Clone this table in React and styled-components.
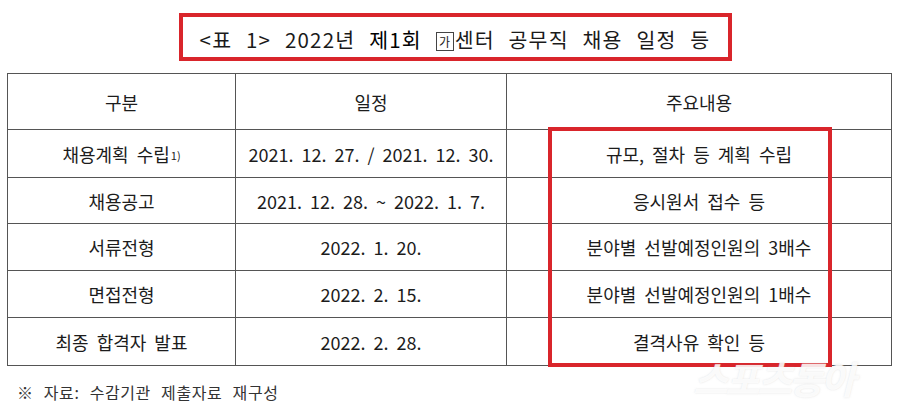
import React from "react";
import styled, { createGlobalStyle } from "styled-components";

const GlobalStyle = createGlobalStyle`
	html, body {
		margin: 0;
		padding: 0;
		background: #fff;
	}
	body {
		font-family: "Noto Sans CJK KR", "Noto Sans", sans-serif;
		color: #222;
	}
`;

const rows = [
	{ name: "채용계획 수립", note: "1)", date: "2021. 12. 27. / 2021. 12. 30.", desc: "규모, 절차 등 계획 수립", h: 48 },
	{ name: "채용공고", date: "2021. 12. 28. ~ 2022. 1. 7.", desc: "응시원서 접수 등", h: 46 },
	{ name: "서류전형", date: "2022. 1. 20.", desc: "분야별 선발예정인원의 3배수", h: 47 },
	{ name: "면접전형", date: "2022. 2. 15.", desc: "분야별 선발예정인원의 1배수", h: 47 },
	{ name: "최종 합격자 발표", date: "2022. 2. 28.", desc: "결격사유 확인 등", h: 48 },
];

function App() {
	return (
		<>
			<GlobalStyle />
			<Page>
				<TitleRow>
					<TitleBox>
						<TitleText>
							&lt;표 1&gt; 2022년 <Strong>제1회</Strong> <Boxed>가</Boxed>센터 공무직 채용 일정 등
						</TitleText>
					</TitleBox>
				</TitleRow>
				<TableWrap>
					<Table>
						<colgroup>
							<col style={{ width: 228 }} />
							<col style={{ width: 271 }} />
							<col />
						</colgroup>
						<thead>
							<tr>
								<Th>구분</Th>
								<Th>일정</Th>
								<Th>주요내용</Th>
							</tr>
						</thead>
						<tbody>
							{rows.map((r) => (
								<tr key={r.name} style={{ height: r.h }}>
									<Td>
										{r.name}
										{r.note && <Note>{r.note}</Note>}
									</Td>
									<Td>{r.date}</Td>
									<Td>{r.desc}</Td>
								</tr>
							))}
						</tbody>
					</Table>
					<Highlight />
					<Watermark>스포츠동아</Watermark>
				</TableWrap>
				<Source>※ 자료: 수감기관 제출자료 재구성</Source>
			</Page>
		</>
	);
}

const Page = styled.div`
	width: 900px;
	height: 413px;
	padding: 13px 8px 0 7px;
	box-sizing: border-box;
	overflow: hidden;
`;

const TitleRow = styled.div`
	display: flex;
	justify-content: center;
	padding-left: 11px;
	margin-bottom: 12px;
`;

const TitleBox = styled.div`
	width: 553px;
	height: 48px;
	box-sizing: border-box;
	border: 4px solid #d9252b;
	display: flex;
	align-items: center;
	justify-content: center;
	padding-top: 3px;
`;

const TitleText = styled.span`
	font-size: 20.5px;
	word-spacing: 8px;
	letter-spacing: 1.2px;
	color: #1a1a1a;
	white-space: pre;
`;

const Strong = styled.span`
	color: #000;
`;

const Boxed = styled.span`
	display: inline-flex;
	align-items: center;
	justify-content: center;
	width: 16px;
	height: 17px;
	border: 1px solid #444;
	font-size: 12px;
	margin-right: 1px;
	line-height: 1;
	letter-spacing: 0;
	word-spacing: 0;
	vertical-align: 1px;
`;

const TableWrap = styled.div`
	position: relative;
`;

const Table = styled.table`
	width: 885px;
	border-collapse: collapse;
	border: 1px solid #555;
	table-layout: fixed;
	font-size: 18px;
	color: #1c1c1c;
`;

const Th = styled.th`
	height: 55px;
	font-weight: 400;
	border: 1px solid #555;
	text-align: center;
	padding: 0;
`;

const Td = styled.td`
	border: 1px solid #555;
	text-align: center;
	padding: 0;
	word-spacing: 4px;
`;

const Note = styled.span`
	font-size: 11px;
	margin-left: 1px;
	position: relative;
	top: -2px;
	word-spacing: 0;
`;

const Highlight = styled.div`
	position: absolute;
	left: 541px;
	top: 54px;
	width: 284px;
	height: 240px;
	box-sizing: border-box;
	border: 4px solid #d9252b;
	pointer-events: none;
`;

const Watermark = styled.div`
	position: absolute;
	left: 686px;
	top: 286px;
	font-size: 38px;
	line-height: 38px;
	font-weight: 700;
	font-style: italic;
	color: rgba(255, 255, 255, 0.85);
	text-shadow: 0 0 2px rgba(170, 170, 170, 0.35);
	letter-spacing: -3px;
	pointer-events: none;
`;

const Source = styled.div`
	margin-top: 14px;
	padding-left: 10px;
	font-size: 16px;
	color: #333;
	word-spacing: 6px;
	letter-spacing: 0.6px;
`;

export default App;
